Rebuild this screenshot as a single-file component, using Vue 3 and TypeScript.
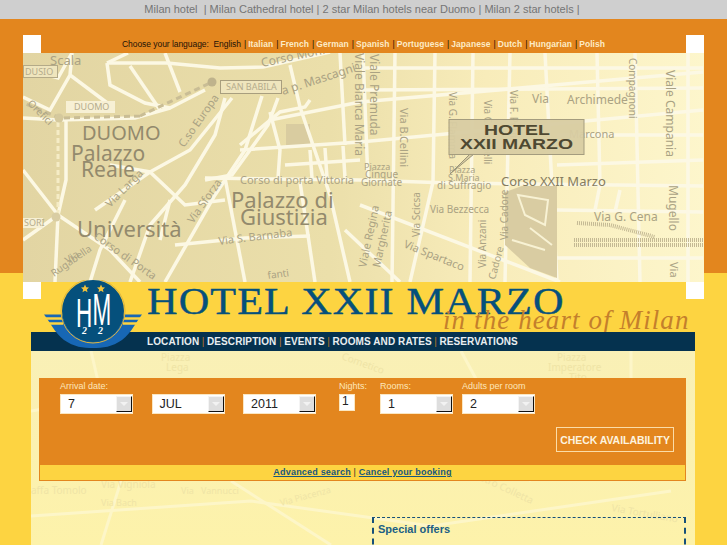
<script setup lang="ts">
interface Label { t: string; x: number; y: number; s: number; r?: number; c?: string }

const topLinks = ['Milan hotel ', 'Milan Cathedral hotel', '2 star Milan hotels near Duomo', 'Milan 2 star hotels']
const languages = ['Italian', 'French', 'German', 'Spanish', 'Portuguese', 'Japanese', 'Dutch', 'Hungarian', 'Polish']
const navItems = ['LOCATION', 'DESCRIPTION', 'EVENTS', 'ROOMS AND RATES', 'RESERVATIONS']

const roads: string[] = [
  'M23 68 L58 78 L72 53',
  'M107 63 L167 63 L220 68 L263 67 L330 52',
  'M107 63 L110 85 L145 103 L170 108 L205 90',
  'M107 63 L128 53',
  'M165 53 L180 92',
  'M130 66 L160 110',
  'M72 53 L70 75 L50 110 L23 97',
  'M70 75 L110 105',
  'M23 118 L58 120 L135 118 L170 108',
  'M66 118 L66 180 L58 215',
  'M58 215 L23 170',
  'M58 215 L110 250 L140 282',
  'M58 215 L23 240',
  'M58 215 L55 282',
  'M110 165 L150 172 L185 205 L225 200',
  'M150 172 L190 150 L232 98',
  'M225 98 L215 135 L185 185 L150 225 L130 282',
  'M262 96 L245 150 L215 195 L165 282',
  'M278 98 L268 125 L232 175 L205 180',
  'M95 210 L150 172',
  'M125 200 L100 250 L90 282',
  'M160 240 L170 200',
  'M175 245 L245 238 L310 236',
  'M225 178 L245 282',
  'M300 182 L315 282',
  'M205 178 L360 180 L450 183 L703 186',
  'M240 145 L280 112 L305 107 L310 100',
  'M290 65 L300 107 L330 195 L350 282',
  'M240 150 L360 142 L703 110',
  'M270 120 L360 102 L703 72',
  'M270 112 L280 150 L278 178',
  'M310 150 L312 178',
  'M325 148 L327 178',
  'M343 146 L345 178',
  'M285 165 L360 160',
  'M340 53 L345 145',
  'M363 53 L368 182',
  'M395 53 L392 282',
  'M435 53 L433 182 L410 282',
  'M473 53 L470 282',
  'M510 53 L505 282',
  'M545 53 L557 282',
  'M597 53 L600 185',
  'M635 53 L640 282',
  'M688 53 L688 282',
  'M360 68 L703 68',
  'M360 90 L703 88',
  'M557 135 L703 135',
  'M557 165 L703 160',
  'M360 205 L560 282',
  'M345 230 L400 282',
  'M557 210 L703 212',
  'M557 258 L703 258',
  'M600 185 L595 210',
  'M620 190 L615 212',
]

const mapLabels: Label[] = [
  { t: 'Scala', x: 50, y: 65, s: 13 },
  { t: 'Corso Monforte', x: 262, y: 67, s: 12, r: -12 },
  { t: 'a p. Mascagni', x: 283, y: 95, s: 12, r: -18 },
  { t: 'DUOMO', x: 82, y: 140, s: 20, c: '#938a6d' },
  { t: 'Palazzo', x: 71, y: 161, s: 21, c: '#938a6d' },
  { t: 'Reale', x: 81, y: 177, s: 21, c: '#938a6d' },
  { t: 'Università', x: 77, y: 237, s: 22, c: '#938a6d' },
  { t: 'Palazzo di', x: 231, y: 208, s: 22, c: '#938a6d' },
  { t: 'Giustizia', x: 240, y: 225, s: 22, c: '#938a6d' },
  { t: 'Corso di porta Vittoria', x: 240, y: 184, s: 11 },
  { t: 'Via S. Barnaba', x: 219, y: 245, s: 11, r: -7 },
  { t: 'Via Larga', x: 110, y: 208, s: 11, r: -45 },
  { t: 'Via Sforza', x: 193, y: 224, s: 11, r: -55 },
  { t: 'C.so Europa', x: 184, y: 148, s: 11, r: -55 },
  { t: 'Corso di Porta', x: 93, y: 238, s: 11, r: 35 },
  { t: 'Via', x: 68, y: 264, s: 10, r: -35 },
  { t: 'Rugabella', x: 54, y: 277, s: 10, r: -35 },
  { t: 'Orefici', x: 27, y: 104, s: 10, r: 45 },
  { t: 'Viale Bianca Maria', x: 355, y: 53, s: 12, r: 90 },
  { t: 'Viale Premuda', x: 370, y: 54, s: 12, r: 90 },
  { t: 'Via B.Cellini', x: 400, y: 108, s: 11, r: 90 },
  { t: 'Via G. Flamma', x: 449, y: 92, s: 10, r: 90 },
  { t: 'Via C. Cornelli', x: 484, y: 100, s: 10, r: 90 },
  { t: 'Via F. Petti', x: 510, y: 90, s: 10, r: 90 },
  { t: 'Via', x: 532, y: 103, s: 12 },
  { t: 'Archimede', x: 567, y: 104, s: 12 },
  { t: 'Compagnoni', x: 629, y: 58, s: 10, r: 90 },
  { t: 'Viale Campania', x: 666, y: 70, s: 12, r: 90 },
  { t: 'Mugello', x: 669, y: 185, s: 12, r: 90 },
  { t: 'Via', x: 670, y: 262, s: 11, r: 90 },
  { t: 'Via G. Cena', x: 594, y: 221, s: 12 },
  { t: 'Marcona', x: 569, y: 138, s: 11 },
  { t: 'Corso XXII Marzo', x: 501, y: 186, s: 13, c: '#857c60' },
  { t: 'Piazza', x: 364, y: 170, s: 9 },
  { t: 'Cinque', x: 365, y: 178, s: 10 },
  { t: 'Giornate', x: 361, y: 186, s: 10 },
  { t: 'Piazza', x: 449, y: 173, s: 9 },
  { t: 'S.Maria', x: 448, y: 181, s: 9 },
  { t: 'di Suffragio', x: 437, y: 189, s: 10 },
  { t: 'Via Bezzecca', x: 430, y: 213, s: 10 },
  { t: 'Via Scicsa', x: 420, y: 237, s: 10, r: -90 },
  { t: 'Viale Regina', x: 366, y: 268, s: 11, r: -78 },
  { t: 'Margherita', x: 380, y: 268, s: 11, r: -78 },
  { t: 'Via Spartaco', x: 403, y: 247, s: 11, r: 22 },
  { t: 'Via Anzani', x: 486, y: 268, s: 10, r: -90 },
  { t: 'Via Cadore', x: 508, y: 240, s: 10, r: -90 },
  { t: 'Cadore', x: 495, y: 280, s: 10, r: -75 },
  { t: 'fanti', x: 268, y: 279, s: 10, r: -8 },
]

const faintLabels: Label[] = [
  { t: 'Piazza', x: 130, y: 10, s: 10 },
  { t: 'Lega', x: 135, y: 20, s: 10 },
  { t: 'Piazza', x: 526, y: 10, s: 10 },
  { t: 'Imperatore', x: 517, y: 20, s: 10 },
  { t: 'Tito', x: 538, y: 30, s: 10 },
  { t: 'Cometico', x: 310, y: 8, s: 10, r: 20 },
  { t: 'Via Tortulliano', x: 580, y: 160, s: 10, r: 10 },
  { t: 'Via Piacenza', x: 250, y: 155, s: 9, r: -15 },
  { t: 'Pietro Colletta', x: 440, y: 125, s: 10, r: 25 },
  { t: 'Via Vigniola', x: 70, y: 137, s: 10 },
  { t: 'Via Bach', x: 70, y: 155, s: 9 },
  { t: 'affa Tomolo', x: 0, y: 143, s: 10 },
  { t: 'Via', x: 150, y: 143, s: 9 },
  { t: 'Vannucci', x: 170, y: 143, s: 9 },
]

const faintRoads: string[] = [
  'M0 60 L120 40 L330 70',
  'M60 0 L90 130 L70 194',
  'M200 130 L300 194',
  'M0 165 L220 150 L400 175 L640 140',
  'M430 0 L500 130',
  'M600 0 L600 120',
]

function labelTransform(l: Label): string | undefined {
  return l.r ? `rotate(${l.r} ${l.x} ${l.y})` : undefined
}
</script>

<template>
  <div class="page">
    <div class="top-links">
      <template v-for="link in topLinks" :key="link">
        <a>{{ link }}</a><span> | </span>
      </template>
    </div>

    <div class="shell">
      <div class="lang-bar">
        <span class="corner"></span>
        <div class="lang-list">
          <span class="lang-dark">Choose your language:&nbsp; English</span>
          <template v-for="lang in languages" :key="lang">
            <span class="lang-sep">|</span><a class="lang-link">{{ lang }}</a>
          </template>
        </div>
        <span class="corner"></span>
      </div>

      <svg class="map" viewBox="23 53 681 229" width="681" height="229">
        <defs>
          <linearGradient id="mapfill" x1="0" x2="1" y1="0" y2="0">
            <stop offset="0" stop-color="#e2d5a3" />
            <stop offset="0.45" stop-color="#ebdfaa" />
            <stop offset="0.68" stop-color="#f8ecba" />
            <stop offset="1" stop-color="#fdf6cc" />
          </linearGradient>
        </defs>
        <rect x="23" y="53" width="681" height="229" fill="url(#mapfill)" />
        <rect x="286" y="124" width="24" height="21" fill="#d9cca0" />
        <g fill="none" stroke="#fcf8e4" stroke-width="3.500">
          <path v-for="d in roads" :key="d" :d="d" />
        </g>
        <path d="M505 192 L522 186 L557 186 L557 278 L530 268 L505 245 Z" fill="#d9cca2" />
        <path d="M518 195 L548 200 L545 225 L525 215 Z M512 240 L545 250 M530 228 L552 245" fill="none" stroke="#f8f2d4" stroke-width="2" />
        <path d="M140 116 L212 82 M140 116 L60 118 M60 118 L23 103" fill="none" stroke="#c9bd95" stroke-width="3" stroke-dasharray="6 4" />
        <path d="M58 122 L58 215" fill="none" stroke="#f5ecc6" stroke-width="3" stroke-dasharray="5 3" />
        <circle cx="212" cy="82" r="4.500" fill="#bfb38c" />
        <circle cx="59" cy="118" r="4.500" fill="#d5c99d" />
        <circle cx="56" cy="217" r="4.500" fill="#d9cda3" />
        <g fill="none" stroke="#c4b994" stroke-dasharray="1 1">
          <path d="M577 223 L610 225 L655 237" stroke-width="4" />
          <path d="M574 240 L703 240" stroke-width="4" />
          <path d="M574 245 L703 245" stroke-width="4" />
        </g>
        <g class="map-text">
          <text
            v-for="l in mapLabels"
            :key="l.t + l.x"
            :x="l.x"
            :y="l.y"
            :font-size="l.s"
            :fill="l.c || '#aaa283'"
            :transform="labelTransform(l)"
          >{{ l.t }}</text>
        </g>
        <rect x="23.500" y="65.500" width="34" height="12" fill="#efe5bd" stroke="#b4aa88" />
        <rect x="220.500" y="80.500" width="61" height="13" fill="#efe5bd" stroke="#a89e7e" />
        <rect x="66" y="101" width="49" height="12" fill="#f7f0d4" />
        <rect x="23" y="218" width="20" height="10" fill="#f7f0d4" />
        <g class="map-text" fill="#b5ac8c" font-size="9">
          <text x="25" y="75">DUSIO</text>
          <text x="226" y="90">SAN BABILA</text>
          <text x="74" y="110">DUOMO</text>
          <text x="24" y="226">SORI</text>
        </g>
        <path d="M470 154 L450 174 L474 154 Z" fill="#d8cca2" stroke="#9b9478" />
        <rect x="449" y="119.500" width="135" height="35" fill="#d8cca2" fill-opacity="0.95" stroke="#a49c7e" />
        <g class="callout" fill="#4f4932">
          <text x="484" y="135" font-size="14" textLength="66" lengthAdjust="spacingAndGlyphs">HOTEL</text>
          <text x="460" y="148.500" font-size="14" textLength="113" lengthAdjust="spacingAndGlyphs">XXII MARZO</text>
        </g>
      </svg>

      <header class="brand">
        <span class="corner corner-short"></span>
        <h1 class="brand-title">HOTEL XXII MARZO</h1>
        <span class="corner corner-short"></span>
        <span class="brand-tag">in the heart of Milan</span>
      </header>

      <main class="content">
        <nav class="nav">
          <template v-for="(item, i) in navItems" :key="item">
            <span v-if="i" class="nav-sep">|</span><a class="nav-link">{{ item }}</a>
          </template>
        </nav>

        <div class="content-body">
          <svg class="watermark" viewBox="0 0 664 194" width="664" height="194">
            <g fill="none" stroke="#fdf6c8" stroke-width="3">
              <path v-for="d in faintRoads" :key="d" :d="d" />
            </g>
            <g class="map-text">
              <text
                v-for="l in faintLabels"
                :key="l.t + l.x"
                :x="l.x"
                :y="l.y"
                :font-size="l.s"
                fill="#efe4a6"
                :transform="labelTransform(l)"
              >{{ l.t }}</text>
            </g>
          </svg>

          <form class="booking" @submit.prevent>
            <div class="booking-main">
              <div class="fields">
                <div class="field">
                  <span class="field-label">Arrival date:</span>
                  <div class="date-row">
                    <div class="select"><span>7</span><i class="select-btn"><b></b></i></div>
                    <div class="select"><span>JUL</span><i class="select-btn"><b></b></i></div>
                    <div class="select"><span>2011</span><i class="select-btn"><b></b></i></div>
                  </div>
                </div>
                <div class="field nights">
                  <span class="field-label">Nights:</span>
                  <div class="nights-input">1</div>
                </div>
                <div class="field rooms">
                  <span class="field-label">Rooms:</span>
                  <div class="select"><span>1</span><i class="select-btn"><b></b></i></div>
                </div>
                <div class="field adults">
                  <span class="field-label">Adults per room</span>
                  <div class="select"><span>2</span><i class="select-btn"><b></b></i></div>
                </div>
              </div>
              <div class="action-row">
                <button class="check" type="submit">CHECK AVAILABILITY</button>
              </div>
            </div>
            <div class="booking-links">
              <a>Advanced search</a><span class="links-sep"> | </span><a>Cancel your booking</a>
            </div>
          </form>

          <section class="offers">
            <h2>Special offers</h2>
          </section>
        </div>
      </main>

      <svg class="logo" viewBox="44 280 98 69" width="98" height="69">
        <path d="M44 314.500 L62 314.500 C66 332 78 339 93 339 C108 339 120 332 124 314.500 L142 314.500 C136 322 132 332 122 340 C112 347 103 348 93 348 C83 348 74 347 64 340 C54 332 50 322 44 314.500 Z" fill="#1767b5" />
        <path d="M44 318.500 H62 M47 323.500 H63 M140 318.500 H124 M138 323.500 H123" stroke="#fdd441" stroke-width="2.500" />
        <circle cx="93" cy="311" r="32" fill="none" stroke="#e0b53a" stroke-width="1" />
        <circle cx="93" cy="311" r="31" fill="#05507c" />
        <path d="M85 284.500 L86.200 287.200 L89 287.500 L86.900 289.400 L87.500 292.200 L85 290.800 L82.500 292.200 L83.100 289.400 L81 287.500 L83.800 287.200 Z" fill="#f2c23c" />
        <path d="M101 284.500 L102.200 287.200 L105 287.500 L102.900 289.400 L103.500 292.200 L101 290.800 L98.500 292.200 L99.100 289.400 L97 287.500 L99.800 287.200 Z" fill="#f2c23c" />
        <text class="logo-hm" transform="translate(76 327) scale(0.75 1.35)" font-size="30">H</text>
        <text class="logo-hm" transform="translate(92.500 325) scale(0.75 1.45)" font-size="30">M</text>
        <text class="logo-two" x="82" y="334" font-size="10">2</text>
        <text class="logo-two" x="98" y="334" font-size="10">2</text>
      </svg>
    </div>
  </div>
</template>

<style>
html,
body {
  margin: 0;
  padding: 0;
  overflow: hidden;
}
</style>

<style scoped>
.page {
  position: relative;
  width: 727px;
  height: 545px;
  overflow: hidden;
  background: linear-gradient(#e3861e 273px, #fdd441 273px);
  font-family: "Liberation Sans", Arial, sans-serif;
}

.top-links {
  height: 19px;
  line-height: 18px;
  background: #cfcfcf;
  color: #757575;
  font-size: 11px;
  text-align: center;
  white-space: pre;
}

.shell {
  position: relative;
  width: 681px;
  margin: 16px 0 0 23px;
}

.lang-bar {
  display: flex;
  height: 18px;
}

.corner {
  flex: none;
  width: 18px;
  height: 18px;
  background: #fff;
}

.corner-short {
  height: 17px;
}

.lang-list {
  flex: 1;
  display: flex;
  justify-content: center;
  align-items: center;
  color: #1d1206;
  font-size: 8.500px;
  white-space: pre;
}

.lang-dark {
  color: #1d1206;
  letter-spacing: -0.05px;
}

.lang-sep {
  margin: 0 2px 0 3px;
}

.lang-link {
  color: #fdebc6;
  font-weight: 700;
  letter-spacing: 0.06px;
}

.map {
  display: block;
}

.brand {
  position: relative;
  display: flex;
  justify-content: space-between;
  height: 50px;
  overflow: hidden;
  background: #fdd441;
}

.brand-title {
  flex: 1;
  margin: 0 0 0 106px;
  color: #05507c;
  font-family: "Liberation Serif", serif;
  font-size: 38px;
  font-weight: 400;
  line-height: 38px;
  letter-spacing: 1px;
  white-space: nowrap;
  transform: scaleX(1.112);
  transform-origin: left center;
  -webkit-text-stroke: 0.4px #05507c;
}

.brand-tag {
  position: absolute;
  left: 420px;
  top: 20px;
  color: #c47f2c;
  font-family: "Liberation Serif", serif;
  font-size: 27px;
  font-style: italic;
  letter-spacing: 1.100px;
  line-height: 36px;
  white-space: nowrap;
}

.content {
  width: 664px;
  margin-left: 8px;
}

.nav {
  display: flex;
  align-items: center;
  box-sizing: border-box;
  height: 19px;
  padding: 0 0 1px 116px;
  background: #05324f;
  color: #e9eef0;
  font-size: 10px;
  font-weight: 700;
  letter-spacing: 0.1px;
  white-space: nowrap;
}

.nav-sep {
  margin: 0 2.500px;
  color: #b5772a;
  font-weight: 400;
}

.content-body {
  position: relative;
  height: 194px;
  padding: 27px 9px 0 8px;
  background: linear-gradient(#f9f0b6, #fdf2aa);
  box-sizing: border-box;
}

.watermark {
  position: absolute;
  left: 0;
  top: 0;
}

.booking {
  position: relative;
  background: #e3861e;
}

.booking-main {
  height: 85px;
  box-sizing: border-box;
  padding: 4px 12px 0 21px;
}

.fields {
  display: flex;
}

.field {
  display: flex;
  flex-direction: column;
}

.field-label {
  height: 12px;
  color: #fde6bb;
  font-size: 9px;
  line-height: 9px;
  white-space: nowrap;
}

.date-row {
  display: flex;
  gap: 18.500px;
}

.nights {
  width: 16px;
  margin-left: 23px;
}

.rooms {
  margin-left: 25px;
}

.adults {
  margin-left: 9px;
}

.select {
  display: flex;
  justify-content: space-between;
  align-items: center;
  box-sizing: border-box;
  width: 73px;
  height: 20px;
  padding: 0 0 0 7px;
  background: #fff;
  border: 1px solid #fbe7c2;
  color: #222;
  font-size: 12.500px;
}

.select-btn {
  position: relative;
  box-sizing: border-box;
  width: 16px;
  height: 16px;
  background: #dedede;
  border-style: solid;
  border-width: 1px;
  border-color: #f4f4f4 #111 #111 #f4f4f4;
}

.select-btn b {
  position: absolute;
  left: 3px;
  top: 5px;
  width: 0;
  height: 0;
  border-left: 4px solid transparent;
  border-right: 4px solid transparent;
  border-top: 4px solid #f2f2f2;
}

.nights-input {
  box-sizing: border-box;
  width: 16px;
  height: 17px;
  padding-left: 2px;
  background: #fff;
  border: 1px solid #fbe7c2;
  color: #222;
  font-size: 12px;
  line-height: 13px;
}

.action-row {
  display: flex;
  justify-content: flex-end;
  margin-top: 13px;
}

.check {
  width: 118px;
  height: 25px;
  padding: 0;
  background: transparent;
  border: 1px solid #fbdca8;
  color: #fdf3df;
  font-family: "Liberation Sans", Arial, sans-serif;
  font-size: 10.500px;
  font-weight: 700;
  letter-spacing: -0.05px;
  white-space: nowrap;
}

.booking-links {
  box-sizing: border-box;
  height: 18px;
  background: #fdd441;
  border: 1px solid #e3861e;
  border-top-width: 2px;
  text-align: center;
  font-size: 9px;
  font-weight: 700;
  line-height: 14px;
  letter-spacing: 0.2px;
  color: #16587f;
}

.booking-links a {
  text-decoration: underline;
}

.links-sep {
  color: #33302a;
  font-weight: 400;
}

.offers {
  position: relative;
  box-sizing: border-box;
  width: 314px;
  height: 60px;
  margin: 36px 0 0 333px;
  border-style: dashed;
  border-color: #16507a;
  border-width: 1px 2px;
  padding: 4px 4px;
}

.offers h2 {
  margin: 0;
  color: #205f85;
  font-size: 11px;
  font-weight: 700;
  line-height: 14px;
}

.map-text text,
.map-text {
  font-family: "Noto Sans", sans-serif;
}

.callout text {
  font-family: "Liberation Sans", sans-serif;
  font-weight: 700;
}

.logo {
  position: absolute;
  left: 21px;
  top: 245px;
}

.logo-hm {
  fill: #fff;
  font-family: "Liberation Sans", sans-serif;
}

.logo-two {
  fill: #fff;
  font-family: "Liberation Serif", serif;
  font-style: italic;
  font-weight: 700;
}
</style>
